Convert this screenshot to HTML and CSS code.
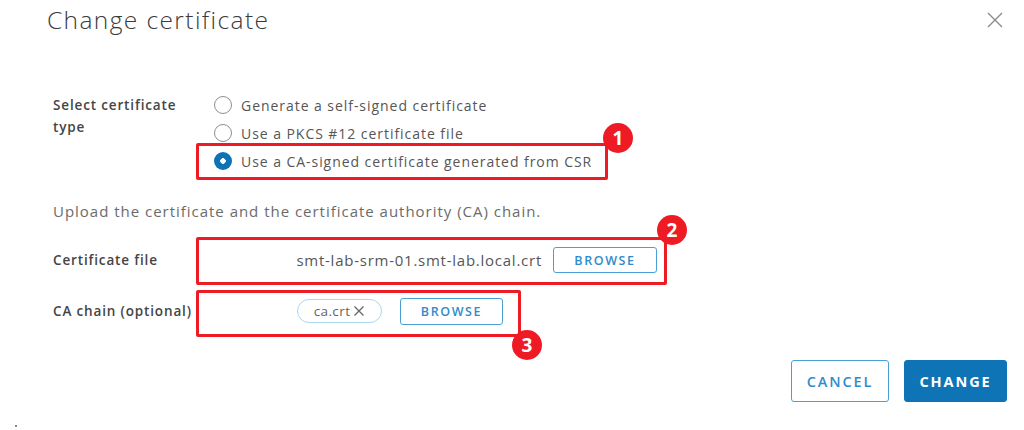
FILE: index.html
```html
<!DOCTYPE html>
<html lang="en">
<head>
<meta charset="utf-8">
<title>Change certificate</title>
<link rel="stylesheet" href="styles.css">
</head>
<body>
<div class="dialog">
  <header class="header">
    <h1 class="title">Change certificate</h1>
    <button class="close" aria-label="Close">
      <svg width="16" height="16" viewBox="0 0 16 16"><path d="M1 1 L15 15 M15 1 L1 15" stroke="#8a8a8a" stroke-width="1.4" fill="none"/></svg>
    </button>
  </header>

  <section class="form">
    <div class="row row-type">
      <div class="label label-type">Select certificate<br>type</div>
      <div class="radios">
        <label class="option"><span class="radio"></span><span>Generate a self-signed certificate</span></label>
        <label class="option"><span class="radio"></span><span>Use a PKCS #12 certificate file</span></label>
        <label class="option option-annot"><span class="radio checked"></span><span>Use a CA-signed certificate generated from CSR</span>
          <span class="annot annot-1"></span><span class="badge badge-1">1</span>
        </label>
      </div>
    </div>

    <p class="hint">Upload the certificate and the certificate authority (CA) chain.</p>

    <div class="row row-file">
      <div class="label">Certificate file</div>
      <div class="field field-cert">
        <span class="filename">smt-lab-srm-01.smt-lab.local.crt</span>
        <button class="browse">BROWSE</button>
        <span class="annot annot-2"></span><span class="badge badge-2">2</span>
      </div>
    </div>

    <div class="row row-chain">
      <div class="label">CA chain (optional)</div>
      <div class="field field-chain">
        <span class="pill">ca.crt<svg width="12" height="12" viewBox="0 0 12 12"><path d="M1.5 1.5 L10.5 10.5 M10.5 1.5 L1.5 10.5" stroke="#666" stroke-width="1.3" fill="none"/></svg></span>
        <button class="browse">BROWSE</button>
        <span class="annot annot-3"></span><span class="badge badge-3">3</span>
      </div>
    </div>
  </section>

  <footer class="footer">
    <button class="btn btn-outline">CANCEL</button>
    <button class="btn btn-primary">CHANGE</button>
  </footer>
  <span class="dot"></span>
</div>
</body>
</html>
```

FILE: styles.css
```css
* { box-sizing: border-box; }
html, body { margin: 0; padding: 0; background: #fff; }
body {
  width: 1024px;
  height: 430px;
  overflow: hidden;
  font-family: "Open Sans", "Liberation Sans", sans-serif;
  color: #565656;
}
.dialog { position: relative; height: 430px; }

.header {
  height: 40px;
  display: flex;
  align-items: center;
  justify-content: space-between;
  padding: 0 21px 0 47px;
}
.title {
  margin: 0;
  font-size: 24.5px;
  font-weight: 300;
  line-height: 40px;
  color: #3a3a3a;
  letter-spacing: 1.4px;
}
.close {
  border: 0;
  background: none;
  padding: 0;
  width: 16px;
  height: 16px;
  display: flex;
}

.form { padding: 51px 0 0 53px; }
.row {
  display: grid;
  grid-template-columns: 143px auto;
  align-items: center;
}
.row-type { align-items: start; }
.label {
  font-size: 13.5px;
  font-weight: 600;
  color: #454545;
  white-space: nowrap;
  letter-spacing: 0.85px;
}
.label-type { line-height: 22px; padding-top: 3px; }

.radios { display: flex; flex-direction: column; }
.option {
  position: relative;
  height: 28px;
  display: flex;
  align-items: center;
  gap: 9px;
  padding-left: 18px;
  font-size: 14px;
  color: #565656;
  letter-spacing: 0.95px;
  white-space: nowrap;
}
.radio {
  width: 18px;
  height: 18px;
  border-radius: 50%;
  border: 1px solid #8e8e8e;
  background: #fff;
  flex: none;
}
.radio.checked {
  border: 0;
  background: radial-gradient(circle, #fff 0 2.5px, #0e72b5 3px);
}

.annot {
  position: absolute;
  border: 3px solid #ee1b24;
  border-radius: 2px;
  pointer-events: none;
}
.badge {
  position: absolute;
  width: 30px;
  height: 30px;
  border-radius: 50%;
  background: #ee1b24;
  color: #fff;
  font-family: "Open Sans", sans-serif;
  font-weight: 700;
  font-size: 19px;
  line-height: 30px;
  text-align: center;
  letter-spacing: 0;
}
.annot-1 { left: 0; top: -4px; width: 412px; height: 37px; }
.badge-1 { left: 407px; top: -24px; }

.hint {
  margin: 26px 0 0;
  font-size: 15px;
  line-height: 20px;
  color: #6b6b6b;
  letter-spacing: 0.98px;
  white-space: nowrap;
}

.row-file { margin-top: 21px; height: 36px; }
.row-chain { margin-top: 15px; height: 36px; }
.field {
  position: relative;
  display: flex;
  align-items: center;
  justify-content: flex-end;
  height: 36px;
}
.field-cert { width: 471px; padding-right: 10px; gap: 11px; }
.field-chain { width: 325px; padding-right: 18px; gap: 18px; }

.filename {
  font-size: 15px;
  color: #565656;
  letter-spacing: 0.75px;
  white-space: nowrap;
}
.browse {
  font-family: "Open Sans", "Liberation Sans", sans-serif;
  font-size: 12.5px;
  font-weight: 600;
  letter-spacing: 1.6px;
  color: #2f8ccc;
  background: #fff;
  border: 1px solid #4aa0d6;
  border-radius: 3px;
  height: 26px;
  width: 104px;
  padding: 0;
}
.field-chain .browse { width: 103px; height: 27px; }

.pill {
  display: inline-flex;
  align-items: center;
  gap: 3px;
  height: 24px;
  width: 85px;
  justify-content: center;
  border: 1px solid #a9d9ef;
  border-radius: 12px;
  font-size: 13.5px;
  letter-spacing: 0.4px;
  color: #666;
}

.annot-2 { left: 0; top: -5px; width: 471px; height: 48px; }
.badge-2 { left: 461px; top: -27px; }
.annot-3 { left: 0; top: -3px; width: 325px; height: 47px; }
.badge-3 { left: 316px; top: 37px; }

.footer {
  display: flex;
  justify-content: flex-end;
  gap: 15px;
  padding-right: 17px;
  margin-top: 31px;
}
.btn {
  height: 42px;
  font-family: "Open Sans", "Liberation Sans", sans-serif;
  font-size: 14.5px;
  font-weight: 600;
  letter-spacing: 1.9px;
  border-radius: 3px;
  padding: 0;
}
.btn-outline {
  width: 98px;
  background: #fff;
  color: #2f8ccc;
  border: 1px solid #4aa0d6;
}
.btn-primary {
  width: 103px;
  background: #0f74b6;
  color: #fff;
  border: 1px solid #0f74b6;
  font-weight: 700;
}
.dot {
  position: absolute;
  left: 15px;
  top: 425px;
  width: 2px;
  height: 2px;
  background: #888;
}
```
